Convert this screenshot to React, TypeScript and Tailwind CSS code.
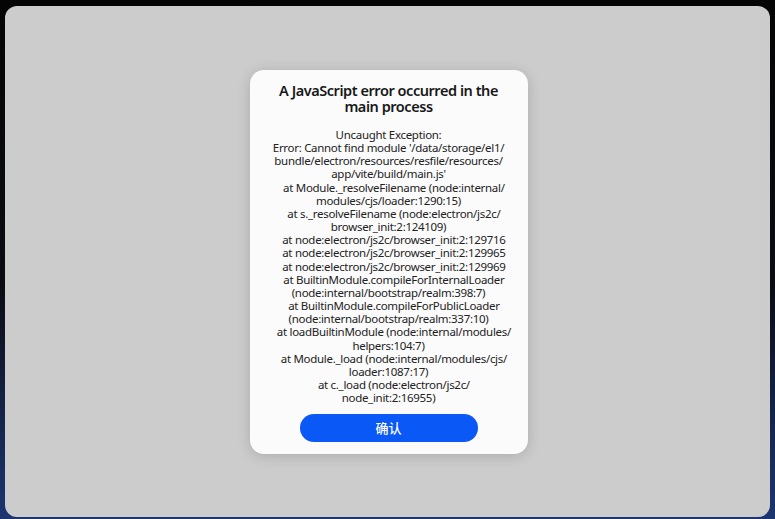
import React from "react";

const lines: string[] = [
  "Uncaught Exception:",
  "Error: Cannot find module '/data/storage/el1/",
  "bundle/electron/resources/resfile/resources/",
  "app/vite/build/main.js'",
  "    at Module._resolveFilename (node:internal/",
  "modules/cjs/loader:1290:15)",
  "    at s._resolveFilename (node:electron/js2c/",
  "browser_init:2:124109)",
  "    at node:electron/js2c/browser_init:2:129716",
  "    at node:electron/js2c/browser_init:2:129965",
  "    at node:electron/js2c/browser_init:2:129969",
  "    at BuiltinModule.compileForInternalLoader",
  "(node:internal/bootstrap/realm:398:7)",
  "    at BuiltinModule.compileForPublicLoader",
  "(node:internal/bootstrap/realm:337:10)",
  "    at loadBuiltinModule (node:internal/modules/",
  "helpers:104:7)",
  "    at Module._load (node:internal/modules/cjs/",
  "loader:1087:17)",
  "    at c._load (node:electron/js2c/",
  "node_init:2:16955)",
];

export default function App() {
  return (
    <div
      className="w-[775px] h-[519px] overflow-hidden bg-[linear-gradient(180deg,#050505_0%,#0a0c12_55%,#15244a_80%,#1d3570_100%)] pt-[6px] pl-[5px]"
      style={{ fontFamily: '"Noto Sans", "Noto Sans CJK SC", sans-serif' }}
    >
      <div className="w-[765px] h-[511px] rounded-[12px] bg-[#cccccc] flex justify-center pt-[64px] pl-[2px]">
        <div className="w-[278px] h-[384px] rounded-[14px] bg-[#fbfbfb] shadow-[0_2px_14px_rgba(0,0,0,0.16)] flex flex-col items-center pt-[13px] px-[6px]">
          <div className="text-[14.5px] leading-[15.5px] font-semibold text-[#181818] text-center tracking-[-0.45px]">
            A JavaScript error occurred in the
            <br />
            main process
          </div>
          <div className="mt-[14px] text-[11.5px] leading-[13.15px] text-[#222222] text-center tracking-[-0.3px]">
            {lines.map((l, i) => (
              <div key={i} className="whitespace-pre">
                {l}
              </div>
            ))}
          </div>
          <button className="mt-[10px] w-[178px] h-[28px] rounded-full bg-[#0a59f7] text-white text-[13px] font-medium flex items-center justify-center">
            确认
          </button>
        </div>
      </div>
    </div>
  );
}
